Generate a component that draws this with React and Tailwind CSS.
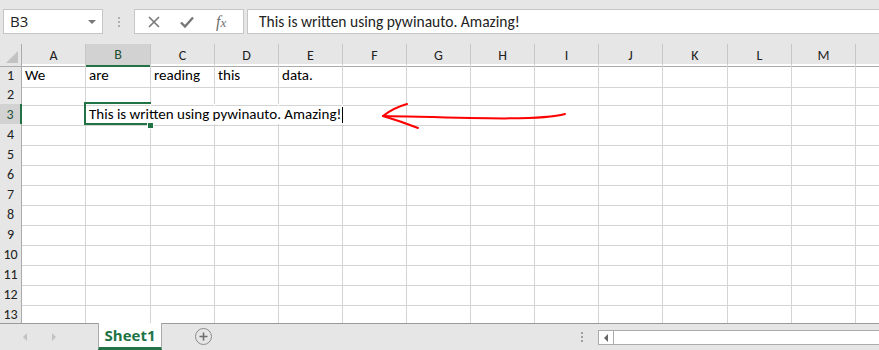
import { Fragment } from 'react';

const cols = ['A', 'B', 'C', 'D', 'E', 'F', 'G', 'H', 'I', 'J', 'K', 'L', 'M', 'N'];
const gridCols =
  'grid grid-cols-[22px_64px_65px_64px_64px_64px_64px_64px_64px_64px_64px_65px_64px_64px_64px]';
const cellFont = { fontFamily: 'Carlito, Lato, "Liberation Sans", sans-serif' };

const row1 = { A: 'We', B: 'are', C: 'reading', D: 'this', E: 'data.' };

function FormulaBar() {
  return (
    <div className="h-[44px] shrink-0 bg-[#e6e6e6] flex items-start pt-[9px]">
      <div className="ml-[3px] w-[100px] h-[25px] bg-white border border-[#c6c6c6] flex items-center justify-between pl-[6px] pr-[6px]">
        <span className="text-[15px] text-[#222]" style={{ fontFamily: '"Open Sans", sans-serif' }}>B3</span>
        <span className="w-0 h-0 border-l-[4px] border-r-[4px] border-t-[4px] border-l-transparent border-r-transparent border-t-[#777]" />
      </div>
      <div className="w-[31px] h-[25px] flex flex-col items-center justify-center gap-[2px]">
        <span className="w-[2px] h-[2px] bg-[#b0b0b0]" />
        <span className="w-[2px] h-[2px] bg-[#b0b0b0]" />
        <span className="w-[2px] h-[2px] bg-[#b0b0b0]" />
      </div>
      <div className="w-[110px] h-[25px] bg-white border border-[#c6c6c6] flex items-center">
        <svg width="14" height="14" viewBox="0 0 14 14" className="ml-[12px]">
          <path d="M2 2 L12 12 M12 2 L2 12" stroke="#777" strokeWidth="1.6" fill="none" />
        </svg>
        <svg width="16" height="14" viewBox="0 0 16 14" className="ml-[18px]">
          <path d="M2 7.5 L6 11.5 L14 2.5" stroke="#777" strokeWidth="2.4" fill="none" />
        </svg>
        <span
          className="ml-[21px] text-[16px] italic text-[#6e6e6e]"
          style={{ fontFamily: '"Liberation Serif", serif' }}
        >
          f<span className="text-[13px]">x</span>
        </span>
      </div>
      <div className="ml-[3px] flex-1 h-[25px] bg-white border border-[#c6c6c6] border-r-0 flex items-center pl-[11px]">
        <span className="text-[15.5px] text-[#222]" style={cellFont}>
          This is written using pywinauto. Amazing!
        </span>
      </div>
    </div>
  );
}

function HeaderRow() {
  return (
    <div className={gridCols + ' h-[20px] shrink-0 bg-[#e6e6e6]'}>
      <div className="relative border-r border-b border-[#ababab]">
        <svg width="14" height="14" className="absolute right-[2px] bottom-[2px]">
          <path d="M13 1 L13 13 L1 13 Z" fill="#c2c2c2" />
        </svg>
      </div>
      {cols.map((c) =>
        c === 'B' ? (
          <div
            key={c}
            className="bg-[#d2d2d2] border-r border-[#c6c6c6] border-b-2 border-b-[#217346] flex items-center justify-center text-[14px] text-[#1e4e33]"
            style={cellFont}
          >
            {c}
          </div>
        ) : (
          <div
            key={c}
            className="border-r border-[#c6c6c6] border-b border-b-[#ababab] flex items-center justify-center text-[14px] text-[#222]"
            style={cellFont}
          >
            {c === 'N' ? '' : c}
          </div>
        )
      )}
    </div>
  );
}

function Row({ n }) {
  const sel = n === 3;
  return (
    <div className={gridCols + ' h-[20px] shrink-0'}>
      <div
        className={
          sel
            ? 'bg-[#d2d2d2] border-b border-b-[#c6c6c6] border-r-2 border-r-[#217346] flex items-center justify-center text-[14px] text-[#1e4e33]'
            : 'bg-[#e6e6e6] border-b border-b-[#c6c6c6] border-r border-r-[#ababab] flex items-center justify-center text-[14px] text-[#222]'
        }
        style={cellFont}
      >
        {n}
      </div>
      {cols.map((c) => {
        const hideRight = sel && (c === 'B' || c === 'C' || c === 'D' || c === 'E');
        return (
          <div
            key={c}
            className={
              'relative border-b border-[#d4d4d4] flex items-center pl-[3px] text-[15px] text-black ' +
              (hideRight ? 'border-r border-r-white' : 'border-r')
            }
            style={cellFont}
          >
            {n === 1 && row1[c]}
            {sel && c === 'B' && (
              <>
                <span className="absolute -left-[2px] -top-[2px] w-[67px] h-[23px] border-2 border-r-0 border-[#217346] z-10" />
                <span className="absolute left-[3px] top-[1px] h-[19px] z-20 whitespace-nowrap flex items-center">
                  This is written using pywinauto. Amazing!
                  <span className="ml-[1px] w-[1px] h-[16px] bg-black" />
                </span>
                <span className="absolute -right-[4px] -bottom-[4px] w-[7px] h-[7px] bg-[#217346] border border-white z-30" />
              </>
            )}
          </div>
        );
      })}
    </div>
  );
}

function TabBar() {
  return (
    <div className="h-[27px] shrink-0 bg-[#e6e6e6] border-t border-[#9b9b9b] flex items-start relative">
      <div className="w-[98px] h-[26px] flex items-center">
        <span className="ml-[23px] w-0 h-0 border-t-[4px] border-b-[4px] border-r-[4px] border-t-transparent border-b-transparent border-r-[#c2c2c2]" />
        <span className="ml-[25px] w-0 h-0 border-t-[4px] border-b-[4px] border-l-[4px] border-t-transparent border-b-transparent border-l-[#c2c2c2]" />
      </div>
      <div className="-mt-[1px] w-[64px] h-[27px] bg-white border-l border-r border-[#ababab] border-b-[3px] border-b-[#217346] flex items-center justify-center">
        <span
          className="text-[15px] font-bold text-[#217346]"
          style={{ fontFamily: '"Open Sans", "Liberation Sans", sans-serif' }}
        >
          Sheet1
        </span>
      </div>
      <div className="ml-[33px] mt-[4px] w-[17px] h-[17px] rounded-full border border-[#8a8a8a] flex items-center justify-center">
        <svg width="9" height="9" viewBox="0 0 9 9">
          <path d="M4.5 0.5 V8.5 M0.5 4.5 H8.5" stroke="#6e6e6e" strokeWidth="1.6" />
        </svg>
      </div>
      <div className="ml-[369px] mt-[8px] flex flex-col gap-[2px]">
        <span className="w-[2px] h-[2px] bg-[#a0a0a0]" />
        <span className="w-[2px] h-[2px] bg-[#a0a0a0]" />
        <span className="w-[2px] h-[2px] bg-[#a0a0a0]" />
      </div>
      <div className="ml-[15px] mt-[6px] flex-1 h-[15px] bg-white border border-[#ababab] border-r-0 flex">
        <div className="w-[15px] h-full border-r border-[#ababab] flex items-center justify-center">
          <span className="w-0 h-0 border-t-[4px] border-b-[4px] border-r-[4px] border-t-transparent border-b-transparent border-r-[#666]" />
        </div>
      </div>
    </div>
  );
}

export default function App() {
  const rows = [1, 2, 3, 4, 5, 6, 7, 8, 9, 10, 11, 12, 13];
  return (
    <div className="w-[879px] h-[350px] overflow-hidden bg-white flex flex-col relative">
      <FormulaBar />
      <HeaderRow />
      <div className="flex-1 overflow-hidden flex flex-col">
        {rows.map((n) => (
          <Fragment key={n}>
            <Row n={n} />
          </Fragment>
        ))}
      </div>
      <TabBar />
      <svg width="879" height="350" className="absolute left-0 top-0 pointer-events-none z-40">
        <path d="M565 114 C 540 121, 470 118, 383 116" stroke="#ff0000" strokeWidth="2" fill="none" strokeLinecap="round" />
        <path d="M407 104 Q 393 108 383 116 Q 400 121 418 128" stroke="#ff0000" strokeWidth="2" fill="none" strokeLinecap="round" strokeLinejoin="round" />
      </svg>
    </div>
  );
}
